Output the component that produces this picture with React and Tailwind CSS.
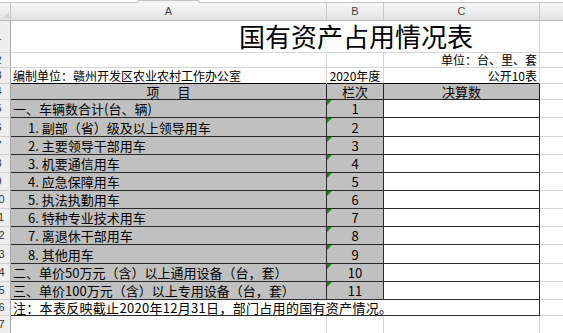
import React from "react";

const FONT = { fontFamily: '"Noto Sans CJK SC", "Noto Sans", sans-serif' };

const GRID = "border-[#d6d6d6]";

function RowHead({ n, h }) {
  return (
    <div
      className="w-[11px] shrink-0 overflow-hidden bg-[#eeeeee] border-r border-b border-r-[#a8a8a8] border-b-[#cfcfcf] flex items-center"
      style={{ height: h }}
    >
      <div className="ml-[-14px] w-[25px] shrink-0 text-center text-[11px] text-[#333] leading-none" style={{ fontFamily: '"Liberation Sans", Arial, sans-serif' }}>
        {n}
      </div>
    </div>
  );
}

const items = [
  { n: 5, a: "一、车辆数合计(台、辆)", b: "1", ind: false, h: 18 },
  { n: 6, a: "1. 副部（省）级及以上领导用车", b: "2", ind: true, h: 19 },
  { n: 7, a: "2. 主要领导干部用车", b: "3", ind: true, h: 18 },
  { n: 8, a: "3. 机要通信用车", b: "4", ind: true, h: 18 },
  { n: 9, a: "4. 应急保障用车", b: "5", ind: true, h: 18 },
  { n: 10, a: "5. 执法执勤用车", b: "6", ind: true, h: 18 },
  { n: 11, a: "6. 特种专业技术用车", b: "7", ind: true, h: 18 },
  { n: 12, a: "7. 离退休干部用车", b: "8", ind: true, h: 18 },
  { n: 13, a: "8. 其他用车", b: "9", ind: true, h: 19 },
  { n: 14, a: "二、单价50万元（含）以上通用设备（台，套）", b: "10", ind: false, h: 18 },
  { n: 15, a: "三、单价100万元（含）以上专用设备（台，套）", b: "11", ind: false, h: 18 },
];

export default function App() {
  return (
    <div className="w-[563px] h-[333px] bg-white overflow-hidden text-black" style={FONT}>
      {/* top strip */}
      <div className="h-[3px] flex border-b border-[#c4c4c4] bg-white">
        <div className="ml-[137px] w-[63px] h-[3px] rounded-t-[3px] border border-b-0 border-[#c4c4c4] bg-[#f4f4f4]" />
      </div>
      {/* column header */}
      <div
        className="h-[18px] flex bg-gradient-to-b from-[#f7f7f7] to-[#e2e2e2] border-b border-[#b8b8b8] text-[11px] text-[#444]"
        style={{ fontFamily: '"Liberation Sans", Arial, sans-serif' }}
      >
        <div className="w-[11px] shrink-0 border-r border-[#c8c8c8] relative">
          <div className="absolute right-[1px] bottom-[2px] w-0 h-0 border-l-[6px] border-l-transparent border-b-[6px] border-b-[#d0d0d0]" />
        </div>
        <div className="w-[316px] shrink-0 border-r border-[#c8c8c8] flex items-center justify-center">A</div>
        <div className="w-[57px] shrink-0 border-r border-[#c8c8c8] flex items-center justify-center">B</div>
        <div className="w-[156px] shrink-0 border-r border-[#c8c8c8] flex items-center justify-center">C</div>
        <div className="flex-1" />
      </div>

      {/* row 1: title */}
      <div className="flex">
        <RowHead n={1} h={32} />
        <div className={`w-[529px] shrink-0 h-[32px] border-r border-b ${GRID} flex items-end pl-[228px] pb-[1px]`}>
          <span className="text-[26px] leading-[30px]">国有资产占用情况表</span>
        </div>
        <div className={`flex-1 h-[32px] border-b ${GRID}`} />
      </div>

      {/* row 2 */}
      <div className="flex">
        <RowHead n={2} h={15} />
        <div className={`w-[316px] shrink-0 h-[15px] border-r border-b ${GRID}`} />
        <div className={`w-[57px] shrink-0 h-[15px] border-r border-b ${GRID}`} />
        <div className={`w-[156px] shrink-0 h-[15px] border-r border-b ${GRID} flex items-center justify-end pr-[2px] text-[12px] leading-[14px]`}>
          单位：台、里、套
        </div>
        <div className={`flex-1 h-[15px] border-b ${GRID}`} />
      </div>

      {/* row 3 */}
      <div className="flex">
        <RowHead n={3} h={16} />
        <div className="w-[316px] shrink-0 h-[16px] border-r border-b border-r-[#d6d6d6] border-b-black flex items-center pl-[2px] text-[12px] leading-[14px]">
          编制单位：赣州开发区农业农村工作办公室
        </div>
        <div className="w-[57px] shrink-0 h-[16px] border-r border-b border-r-[#d6d6d6] border-b-black flex items-center justify-center text-[12px] leading-[14px]">
          2020年度
        </div>
        <div className="w-[156px] shrink-0 h-[16px] border-r border-b border-r-[#d6d6d6] border-b-black flex items-center justify-end pr-[2px] text-[12px] leading-[14px]">
          公开10表
        </div>
        <div className={`flex-1 h-[16px] border-b ${GRID}`} />
      </div>

      {/* row 4: header */}
      <div className="flex">
        <RowHead n={4} h={16} />
        <div className="w-[316px] shrink-0 h-[16px] bg-[#c0c0c0] border-r border-b border-[#222] flex items-center justify-center gap-[18px] text-[13px] leading-[14px]">
          <span>项</span>
          <span>目</span>
        </div>
        <div className="w-[57px] shrink-0 h-[16px] bg-[#c0c0c0] border-r border-b border-[#222] flex items-center justify-center text-[13px] leading-[14px]">
          栏次
        </div>
        <div className="w-[156px] shrink-0 h-[16px] bg-[#c0c0c0] border-r border-b border-[#222] flex items-center justify-center text-[13px] leading-[14px]">
          决算数
        </div>
        <div className={`flex-1 h-[16px] border-b ${GRID}`} />
      </div>

      {/* rows 5-15 */}
      {items.map((r) => (
        <div className="flex" key={r.n}>
          <RowHead n={r.n} h={r.h} />
          <div
            className={`w-[316px] shrink-0 bg-[#c0c0c0] border-r border-b border-[#2a2a2a] flex items-center text-[13px] leading-[15px] whitespace-nowrap ${r.ind ? "pl-[17px]" : "pl-[2px]"}`}
            style={{ height: r.h }}
          >
            {r.a}
          </div>
          <div
            className="w-[57px] shrink-0 bg-[#c0c0c0] border-r border-b border-[#2a2a2a] flex items-center justify-center text-[13px] leading-[15px] relative"
            style={{ height: r.h }}
          >
            <div className="absolute left-0 top-0 w-0 h-0 border-t-[5px] border-t-[#1f8a1f] border-r-[5px] border-r-transparent" />
            {r.b}
          </div>
          <div className="w-[156px] shrink-0 bg-white border-r border-b border-[#2a2a2a]" style={{ height: r.h }} />
          <div className={`flex-1 border-b ${GRID}`} style={{ height: r.h }} />
        </div>
      ))}

      {/* row 16 note */}
      <div className="flex">
        <RowHead n={16} h={16} />
        <div className="w-[529px] shrink-0 h-[16px] border-r border-b border-[#2a2a2a] flex items-center pl-[2px] text-[13px] leading-[14px] tracking-[0.3px] whitespace-nowrap">
          注：本表反映截止2020年12月31日，部门占用的国有资产情况。
        </div>
        <div className={`flex-1 h-[16px] border-b ${GRID}`} />
      </div>

      {/* row 17 */}
      <div className="flex">
        <RowHead n={17} h={18} />
        <div className={`w-[316px] shrink-0 h-[18px] border-r border-b ${GRID}`} />
        <div className={`w-[57px] shrink-0 h-[18px] border-r border-b ${GRID}`} />
        <div className={`w-[156px] shrink-0 h-[18px] border-r border-b ${GRID}`} />
        <div className={`flex-1 h-[18px] border-b ${GRID}`} />
      </div>
    </div>
  );
}
